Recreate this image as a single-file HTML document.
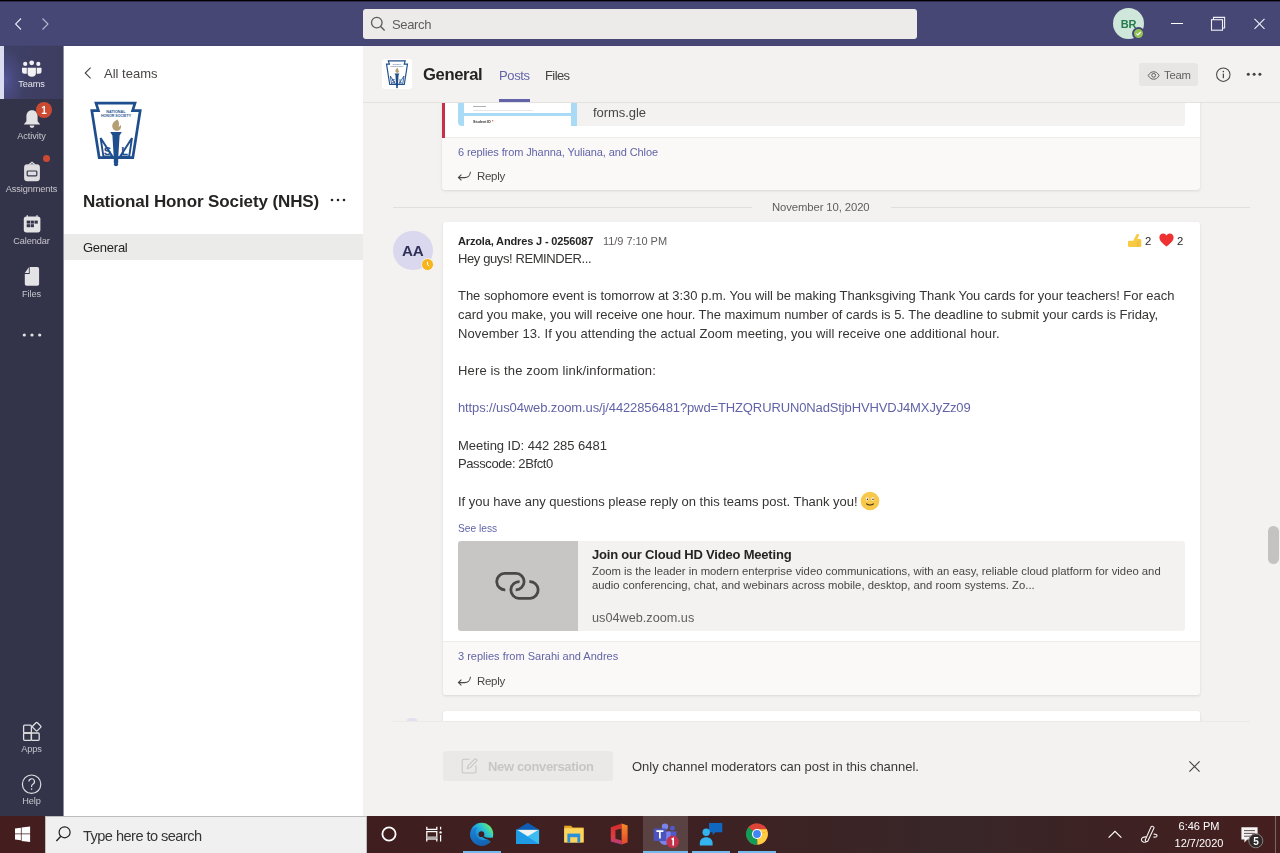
<!DOCTYPE html>
<html><head><meta charset="utf-8">
<style>
*{box-sizing:border-box;margin:0;padding:0}
html,body{width:1280px;height:853px;overflow:hidden;background:#f3f2f1;font-family:"Liberation Sans",sans-serif;color:#252423}
.a{position:absolute}
.t{position:absolute;white-space:nowrap;will-change:transform}
svg{display:block}
</style></head><body>
<div class="a" style="left:0px;top:0px;width:1280px;height:46px;background:#464775"></div>
<div class="a" style="left:0px;top:0px;width:1280px;height:1px;background:#000"></div>
<div class="a" style="left:0px;top:1px;width:1280px;height:1px;background:#2c2c4a"></div>
<div class="a" style="left:0px;top:45px;width:1280px;height:1px;background:#434471"></div>
<svg class="a" style="left:12px;top:16px" width="14" height="16" viewBox="0 0 14 16"><path d="M9 2.5 L3.6 8 L9 13.5" fill="none" stroke="#e8e8f0" stroke-width="1.1"/></svg>
<svg class="a" style="left:38px;top:16px" width="14" height="16" viewBox="0 0 14 16"><path d="M4.5 2.5 L10 8 L4.5 13.5" fill="none" stroke="#b9b9d0" stroke-width="1.1"/></svg>
<div class="a" style="left:363px;top:9px;width:554px;height:30px;background:#edebe9;border-radius:3px"></div>
<svg class="a" style="left:369px;top:15px" width="18" height="18" viewBox="0 0 18 18"><circle cx="7.8" cy="7.6" r="5.3" fill="none" stroke="#5d5b59" stroke-width="1.3"/><path d="M11.6 11.5 L15.6 15.5" stroke="#5d5b59" stroke-width="1.4"/></svg>
<div class="t" style="left:391.5px;top:16px;font-size:13px;line-height:17px;color:#5f5d5b;letter-spacing:-0.35px">Search</div>
<div class="a" style="left:1113px;top:8px;width:31px;height:31px;background:#cfe6da;border-radius:50%"></div>
<div class="t" style="left:1113px;top:17px;font-size:11px;line-height:14px;color:#237b4b;font-weight:700;letter-spacing:-0.3px;width:31px;text-align:center">BR</div>
<div class="a" style="left:1132px;top:27px;width:13px;height:13px;background:#92c353;border-radius:50%;border:2px solid #464775"></div>
<svg class="a" style="left:1134px;top:29px" width="9" height="9" viewBox="0 0 9 9"><path d="M2.3 4.6 L3.9 6 L6.7 3" fill="none" stroke="#fff" stroke-width="1.1"/></svg>
<div class="a" style="left:1171px;top:23px;width:12px;height:1px;background:#fff"></div>
<svg class="a" style="left:1209px;top:15px" width="18" height="18" viewBox="0 0 18 18"><rect x="2.5" y="4.7" width="11" height="10.5" fill="none" stroke="#f0f0f6" stroke-width="1.1"/><path d="M4.5 4.7 V2.4 H15.6 V13 H13.5" fill="none" stroke="#f0f0f6" stroke-width="1.1"/></svg>
<svg class="a" style="left:1252px;top:17px" width="15" height="14" viewBox="0 0 15 14"><path d="M2.5 1.8 L12.5 11.8 M12.5 1.8 L2.5 11.8" stroke="#f0f0f6" stroke-width="1.1"/></svg>
<div class="a" style="left:0px;top:46px;width:63px;height:770px;background:#33344a"></div>
<div class="a" style="left:63px;top:46px;width:1px;height:770px;background:#8d8e9c"></div>
<div class="a" style="left:0px;top:46px;width:63px;height:53px;background:radial-gradient(ellipse 22px 34px at 4px 34px,#55569a 0%,#4a4b80 35%,rgba(61,62,98,0) 100%),linear-gradient(90deg,#3f4066 0px,#3c3d5f 63px)"></div>
<div class="a" style="left:0px;top:46px;width:4px;height:53px;background:#dcdcf0"></div>
<svg class="a" style="left:20px;top:58.5px" width="24" height="20" viewBox="0 0 24 20"><g fill="#f2f2f4"><circle cx="5.2" cy="4.9" r="2.1"/><circle cx="11.7" cy="3.8" r="2.4"/><circle cx="18.3" cy="4.9" r="2.1"/><path d="M2 8.7 h4.8 v6 h-2.3 a2.5 2.5 0 0 1 -2.5 -2.5z"/><path d="M16.7 8.7 h4.8 v3.5 a2.5 2.5 0 0 1 -2.5 2.5 h-2.3z"/><path d="M7.6 8.7 h8.3 v5.2 a4.15 3.8 0 0 1 -8.3 0z"/></g></svg>
<div class="t" style="left:0px;top:78px;font-size:9.2px;line-height:12px;color:#e6e6ea;letter-spacing:-0.1px;width:63px;text-align:center">Teams</div>
<svg class="a" style="left:22px;top:108px" width="20" height="22" viewBox="0 0 20 22"><g fill="#e3e2e4"><path d="M10 2.2 c-3.6 0 -5.6 2.6 -5.6 6.2 v4.8 l-2.6 3.2 h16.4 l-2.6 -3.2 v-4.8 c0 -3.6 -2 -6.2 -5.6 -6.2z"/><path d="M7.6 17.6 h4.8 a2.4 2.4 0 0 1 -4.8 0z"/></g></svg>
<div class="a" style="left:35.5px;top:101.5px;width:16px;height:16px;background:#cc4a31;border-radius:50%"></div>
<div class="t" style="left:35.5px;top:104px;font-size:10px;line-height:13px;color:#fff;font-weight:700;width:16px;text-align:center">1</div>
<div class="t" style="left:0px;top:130px;font-size:9.2px;line-height:12px;color:#c8c6cc;letter-spacing:-0.1px;width:63px;text-align:center">Activity</div>
<div class="a" style="left:43px;top:154.5px;width:7px;height:7px;background:#cc4a31;border-radius:50%"></div>
<svg class="a" style="left:22px;top:160px" width="20" height="23" viewBox="0 0 20 23"><path d="M7.3 4.6 L10 2.3 L12.7 4.6" fill="none" stroke="#dedde0" stroke-width="1.3"/><rect x="2.1" y="4.2" width="15.8" height="17" rx="3.2" fill="#dedde0"/><rect x="5.2" y="11" width="9.6" height="4.8" rx="0.8" fill="none" stroke="#33344a" stroke-width="1.2"/></svg>
<div class="t" style="left:0px;top:182.5px;font-size:9.2px;line-height:12px;color:#c8c6cc;letter-spacing:-0.1px;width:63px;text-align:center">Assignments</div>
<svg class="a" style="left:22px;top:214px" width="20" height="20" viewBox="0 0 20 20"><rect x="1.8" y="2.6" width="16.6" height="15.8" rx="2.6" fill="#e3e2e4"/><g fill="#33344a"><rect x="4.7" y="6.6" width="3.3" height="3"/><rect x="8.6" y="6.6" width="3.3" height="3"/><rect x="12.5" y="6.6" width="3.3" height="3"/><rect x="4.7" y="10.2" width="3.3" height="3"/><rect x="8.6" y="10.2" width="3.3" height="3"/></g><rect x="4.6" y="1.2" width="1.3" height="2.2" fill="#e3e2e4"/><rect x="14.3" y="1.2" width="1.3" height="2.2" fill="#e3e2e4"/></svg>
<div class="t" style="left:0px;top:234.5px;font-size:9.2px;line-height:12px;color:#c8c6cc;letter-spacing:-0.1px;width:63px;text-align:center">Calendar</div>
<svg class="a" style="left:22px;top:265px" width="20" height="22" viewBox="0 0 20 22"><path d="M7.7 2 H15.3 a1.8 1.8 0 0 1 1.8 1.8 V19 a1.8 1.8 0 0 1 -1.8 1.8 H4.6 a1.8 1.8 0 0 1 -1.8 -1.8 V8.9 H7.7z" fill="#e3e2e4"/><path d="M6.9 2.3 L2.8 8.1 H6.9z" fill="#e3e2e4"/></svg>
<div class="t" style="left:0px;top:287.5px;font-size:9.2px;line-height:12px;color:#c8c6cc;letter-spacing:-0.1px;width:63px;text-align:center">Files</div>
<svg class="a" style="left:20px;top:330px" width="24" height="10" viewBox="0 0 24 10"><g fill="#e3e2e4"><circle cx="4.3" cy="5" r="1.6"/><circle cx="12" cy="5" r="1.6"/><circle cx="19.7" cy="5" r="1.6"/></g></svg>
<svg class="a" style="left:21px;top:720px" width="22" height="22" viewBox="0 0 22 22"><g fill="none" stroke="#dedde0" stroke-width="1.3"><rect x="2.6" y="5.2" width="7.8" height="7.8" rx="1"/><rect x="2.6" y="13" width="7.8" height="7.3" rx="1"/><rect x="10.4" y="13" width="7.8" height="7.3" rx="1"/><rect x="12.4" y="3.4" width="6.6" height="6.6" rx="1" transform="rotate(45 15.7 6.7)"/></g></svg>
<div class="t" style="left:0px;top:743px;font-size:9.2px;line-height:12px;color:#c8c6cc;letter-spacing:-0.1px;width:63px;text-align:center">Apps</div>
<svg class="a" style="left:21px;top:773px" width="22" height="22" viewBox="0 0 22 22"><circle cx="10.6" cy="11.2" r="9.2" fill="none" stroke="#dedde0" stroke-width="1.2"/><path d="M7.9 8.6 a2.8 2.8 0 1 1 4.2 2.4 c-1 .6 -1.5 1.1 -1.5 2.3 v.6" fill="none" stroke="#dedde0" stroke-width="1.2"/><circle cx="10.6" cy="16.1" r=".8" fill="#dedde0"/></svg>
<div class="t" style="left:0px;top:795px;font-size:9.2px;line-height:12px;color:#c8c6cc;letter-spacing:-0.1px;width:63px;text-align:center">Help</div>
<div class="a" style="left:64px;top:46px;width:299px;height:770px;background:#fff"></div>
<svg class="a" style="left:81px;top:65px" width="14" height="16" viewBox="0 0 14 16"><path d="M9.6 2.6 L4.2 8 L9.6 13.4" fill="none" stroke="#484644" stroke-width="1.1"/></svg>
<div class="t" style="left:104px;top:65px;font-size:13px;line-height:17px;color:#484644">All teams</div>
<svg class="a" style="left:89px;top:101px" width="54" height="67" viewBox="0 0 54 67"><path d="M7 2.2 H46 L43.6 9.6 H51.2 L43.8 56.6 H10.2 L2.8 9.6 H9.4z" fill="#fff" stroke="#1f4e8c" stroke-width="2.7" stroke-linejoin="miter"/>
 <text x="27" y="11.6" font-family="Liberation Sans" font-size="3.8" font-weight="700" fill="#2b5a94" text-anchor="middle">NATIONAL</text>
 <text x="27" y="16.2" font-family="Liberation Sans" font-size="3.6" font-weight="700" fill="#2b5a94" text-anchor="middle">HONOR SOCIETY</text>
 <path d="M28.5 18.5 c-3.6 1.5 -6 4.6 -5 8.2 c.8 2.4 3.2 3.4 5.2 3 c2.8 -.6 4 -3.4 3 -6 c-.6 1.4 -1.6 2 -2.2 1.8 c1 -2.2 .6 -4.8 -1 -7z" fill="#b49f74"/>
 <path d="M21.2 31 H32.8 L30.6 34.6 L29.2 57 V62 H24.8 V57 L23.4 34.6z" fill="#1f4e8c"/>
 <circle cx="27" cy="63.2" r="2.1" fill="#1f4e8c"/>
 <path d="M11.6 37 L14.4 55.4 H23.4z" fill="none" stroke="#1f4e8c" stroke-width="1.9" stroke-linejoin="miter"/>
 <path d="M43 37 L40.2 55.4 H31.2z" fill="none" stroke="#1f4e8c" stroke-width="1.9" stroke-linejoin="miter"/>
 <text x="18.4" y="54.2" font-family="Liberation Sans" font-size="11" font-weight="700" fill="#1f4e8c" text-anchor="middle">S</text>
 <text x="35.6" y="54.2" font-family="Liberation Sans" font-size="11" font-weight="700" fill="#1f4e8c" text-anchor="middle">L</text></svg>
<div class="t" style="left:83px;top:191px;font-size:17px;line-height:22px;color:#252423;font-weight:700;letter-spacing:-0.1px">National Honor Society (NHS)</div>
<svg class="a" style="left:328px;top:195px" width="20" height="10" viewBox="0 0 20 10"><g fill="#252423"><circle cx="4" cy="5" r="1.3"/><circle cx="10" cy="5" r="1.3"/><circle cx="16" cy="5" r="1.3"/></g></svg>
<div class="a" style="left:64px;top:234px;width:299px;height:26px;background:#ebebea"></div>
<div class="t" style="left:82.6px;top:239px;font-size:13px;line-height:17px;color:#252423;letter-spacing:-0.25px">General</div>
<div class="a" style="left:363px;top:46px;width:917px;height:56px;background:#f3f2f1"></div>
<div class="a" style="left:363px;top:102px;width:917px;height:1px;background:#e4e2e0"></div>
<div class="a" style="left:382px;top:59px;width:30px;height:30px;background:#fff;border-radius:3px"></div>
<svg class="a" style="left:385px;top:60px" width="24" height="29" viewBox="0 0 54 67"><path d="M7 2.2 H46 L43.6 9.6 H51.2 L43.8 56.6 H10.2 L2.8 9.6 H9.4z" fill="#fff" stroke="#1f4e8c" stroke-width="2.7" stroke-linejoin="miter"/>
 <text x="27" y="11.6" font-family="Liberation Sans" font-size="3.8" font-weight="700" fill="#2b5a94" text-anchor="middle">NATIONAL</text>
 <text x="27" y="16.2" font-family="Liberation Sans" font-size="3.6" font-weight="700" fill="#2b5a94" text-anchor="middle">HONOR SOCIETY</text>
 <path d="M28.5 18.5 c-3.6 1.5 -6 4.6 -5 8.2 c.8 2.4 3.2 3.4 5.2 3 c2.8 -.6 4 -3.4 3 -6 c-.6 1.4 -1.6 2 -2.2 1.8 c1 -2.2 .6 -4.8 -1 -7z" fill="#b49f74"/>
 <path d="M21.2 31 H32.8 L30.6 34.6 L29.2 57 V62 H24.8 V57 L23.4 34.6z" fill="#1f4e8c"/>
 <circle cx="27" cy="63.2" r="2.1" fill="#1f4e8c"/>
 <path d="M11.6 37 L14.4 55.4 H23.4z" fill="none" stroke="#1f4e8c" stroke-width="1.9" stroke-linejoin="miter"/>
 <path d="M43 37 L40.2 55.4 H31.2z" fill="none" stroke="#1f4e8c" stroke-width="1.9" stroke-linejoin="miter"/>
 <text x="18.4" y="54.2" font-family="Liberation Sans" font-size="11" font-weight="700" fill="#1f4e8c" text-anchor="middle">S</text>
 <text x="35.6" y="54.2" font-family="Liberation Sans" font-size="11" font-weight="700" fill="#1f4e8c" text-anchor="middle">L</text></svg>
<div class="t" style="left:423px;top:63.5px;font-size:16.6px;line-height:21px;color:#252423;font-weight:700;letter-spacing:-0.35px">General</div>
<div class="t" style="left:498.7px;top:67px;font-size:13px;line-height:17px;color:#6264a7;letter-spacing:-0.35px">Posts</div>
<div class="t" style="left:544.8px;top:67px;font-size:13px;line-height:17px;color:#424242;letter-spacing:-0.6px">Files</div>
<div class="a" style="left:499px;top:99px;width:31px;height:3px;background:#6264a7"></div>
<div class="a" style="left:1139px;top:63px;width:59px;height:23px;background:#e8e6e5;border-radius:3px"></div>
<svg class="a" style="left:1146px;top:69px" width="15" height="12" viewBox="0 0 15 12"><path d="M2.2 6.5 C4 3.5 5.6 2.8 7.65 2.8 C9.7 2.8 11.3 3.5 13.1 6.5 C11.3 9.5 9.7 10.2 7.65 10.2 C5.6 10.2 4 9.5 2.2 6.5z" fill="none" stroke="#605e5c" stroke-width="1"/><circle cx="7.65" cy="6.3" r="1.9" fill="none" stroke="#605e5c" stroke-width="1"/></svg>
<div class="t" style="left:1164px;top:68px;font-size:11.3px;line-height:15px;color:#616161;letter-spacing:-0.25px">Team</div>
<svg class="a" style="left:1214px;top:66px" width="18" height="18" viewBox="0 0 18 18"><circle cx="9.3" cy="8.7" r="6.7" fill="none" stroke="#484644" stroke-width="1.05"/><rect x="8.75" y="7.6" width="1.2" height="4.6" fill="#484644"/><circle cx="9.35" cy="5.6" r=".8" fill="#484644"/></svg>
<svg class="a" style="left:1244px;top:69px" width="20" height="10" viewBox="0 0 20 10"><g fill="#424242"><circle cx="4.3" cy="5.3" r="1.5"/><circle cx="10.1" cy="5.3" r="1.5"/><circle cx="15.9" cy="5.3" r="1.5"/></g></svg>
<div class="a" style="left:363px;top:103px;width:917px;height:618px;overflow:hidden;background:#f3f2f1">
<div class="a" style="left:79px;top:-23px;width:758px;height:110px;background:#faf9f8;border-radius:3px;box-shadow:0 1px 3px rgba(0,0,0,.11)"></div>
<div class="a" style="left:79px;top:-23px;width:758px;height:57.5px;background:#fff;border-radius:3px 3px 0 0;border-bottom:1px solid #edebe9"></div>
<div class="a" style="left:79px;top:-23px;width:3px;height:57.5px;background:#c4314b"></div>
<div class="a" style="left:214px;top:-23px;width:608px;height:46px;background:#f3f2f1;border-radius:0 0 3px 0"></div>
<div class="a" style="left:94.5px;top:-23px;width:119.5px;height:46px;background:#a9dbf6;border-radius:0 0 0 4px"></div>
<div class="a" style="left:101px;top:-23px;width:107px;height:33px;background:#fff"></div>
<div class="a" style="left:101px;top:13px;width:107px;height:10px;background:#fff"></div>
<div class="a" style="left:110px;top:3px;width:13px;height:1px;background:#b0b0b0"></div>
<div class="a" style="left:110px;top:7px;width:60px;height:1px;background:#e6e6e6"></div>
<div class="t" style="left:110px;top:17px;font-size:3.6px;line-height:5px;color:#333;font-weight:700">Student ID <span style="color:#d93025">*</span></div>
<div class="t" style="left:229.5px;top:1px;font-size:13px;line-height:17px;color:#484644;letter-spacing:-0.05px">forms.gle</div>
<div class="t" style="left:94.5px;top:42px;font-size:11px;line-height:14px;color:#6264a7;letter-spacing:-0.1px">6 replies from Jhanna, Yuliana, and Chloe</div>
<svg class="a" style="left:92.5px;top:65.5px" width="16" height="13" viewBox="0 0 16 13"><path d="M14.4 2.8 c0 3.6 -2.6 5.8 -5.8 5.8 H2.6 M5.4 5.6 L2.4 8.6 L5.4 11.4" fill="none" stroke="#484644" stroke-width="1.05"/></svg>
<div class="t" style="left:113.5px;top:66px;font-size:11.5px;line-height:15px;color:#484644;letter-spacing:-0.3px">Reply</div>
<div class="a" style="left:30px;top:104px;width:359px;height:1px;background:#e1dfdd"></div>
<div class="a" style="left:528px;top:104px;width:359px;height:1px;background:#e1dfdd"></div>
<div class="t" style="left:409px;top:97px;font-size:11.3px;line-height:15px;color:#605e5c;letter-spacing:-0.1px">November 10, 2020</div>
<div class="a" style="left:79.5px;top:119px;width:757.5px;height:473px;background:#faf9f8;border-radius:3px;box-shadow:0 1px 3px rgba(0,0,0,.11)"></div>
<div class="a" style="left:79.5px;top:119px;width:757.5px;height:420px;background:#fff;border-radius:3px 3px 0 0;border-bottom:1px solid #edebe9"></div>
<div class="a" style="left:30px;top:127.5px;width:39.5px;height:39.5px;background:#dad8ee;border-radius:50%"></div>
<div class="t" style="left:29.5px;top:138px;font-size:15.2px;line-height:19px;color:#302f58;font-weight:700;letter-spacing:-0.1px;width:39.5px;text-align:center">AA</div>
<div class="a" style="left:58px;top:155px;width:13px;height:13px;background:#f8b41c;border-radius:50%;border:1.5px solid #f3f2f1"></div>
<svg class="a" style="left:58px;top:155px" width="13" height="13" viewBox="0 0 13 13"><path d="M6.5 3.8 V6.7 L8.3 8" fill="none" stroke="#fff" stroke-width="1"/></svg>
<div class="t" style="left:95px;top:131px;font-size:11px;line-height:14px;color:#252423;font-weight:700;letter-spacing:-0.15px">Arzola, Andres J - 0256087</div>
<div class="t" style="left:240px;top:131px;font-size:11px;line-height:14px;color:#605e5c;letter-spacing:-0.05px">11/9 7:10 PM</div>
<svg class="a" style="left:763px;top:129px" width="17" height="17" viewBox="0 0 17 17"><path d="M2 10 C2 9.2 2.6 8.8 3.4 8.8 H7.2 L10.4 2.6 C10.9 1.6 12.4 1.3 12.9 2.3 C13.2 3 13 3.7 12.6 4.5 L11.4 6.9 H14 C15 6.9 15.3 7.6 15.3 8.4 V13.4 C15.3 14.4 14.6 14.9 13.6 14.9 H3.6 C2.6 14.9 2 14.3 2 13.4z" fill="#f9cb45"/><path d="M11.4 9.4 H15 M11.4 11.4 H15 M11.4 13.3 H14.6 M11.4 9.4 V14.6" fill="none" stroke="#e2ac34" stroke-width=".5"/></svg>
<div class="t" style="left:782px;top:131px;font-size:11.3px;line-height:15px;color:#252423">2</div>
<svg class="a" style="left:795px;top:129px" width="17" height="16" viewBox="0 0 17 16"><path d="M8.5 14.6 C5 11.8 1.4 9.2 1.4 5.6 C1.4 3.2 3.2 1.6 5.2 1.6 C6.6 1.6 7.8 2.4 8.5 3.6 C9.2 2.4 10.4 1.6 11.8 1.6 C13.8 1.6 15.6 3.2 15.6 5.6 C15.6 9.2 12 11.8 8.5 14.6z" fill="#ee3232"/></svg>
<div class="t" style="left:813.5px;top:131px;font-size:11.3px;line-height:15px;color:#252423">2</div>
<div class="t" style="left:95px;top:147px;font-size:13px;line-height:18.67px;color:#363534;letter-spacing:-0.03px"><span style="letter-spacing:-0.4px">Hey guys! REMINDER...</span><br>&nbsp;<br>The sophomore event is tomorrow at 3:30 p.m. You will be making Thanksgiving Thank You cards for your teachers! For each<br>card you make, you will receive one hour. The maximum number of cards is 5. The deadline to submit your cards is Friday,<br><span style="letter-spacing:0.09px">November 13. If you attending the actual Zoom meeting, you will receive one additional hour.</span><br>&nbsp;<br><span style="letter-spacing:0.15px">Here is the zoom link/information:</span><br>&nbsp;<br><span style="color:#6264a7;letter-spacing:-0.12px">https://us04web.zoom.us/j/4422856481?pwd=THZQRURUN0NadStjbHVHVDJ4MXJyZz09</span><br>&nbsp;<br>Meeting ID: 442 285 6481<br><span style="letter-spacing:-0.4px">Passcode: 2Bfct0</span><br>&nbsp;<br>If you have any questions please reply on this teams post. Thank you!</div>
<svg class="a" style="left:497px;top:387.5px" width="20" height="20" viewBox="0 0 20 20"><circle cx="10" cy="10" r="9.3" fill="#f8c84a"/><ellipse cx="7.2" cy="8" rx="1.4" ry="1.7" fill="#fff"/><ellipse cx="12.8" cy="8" rx="1.4" ry="1.7" fill="#fff"/><circle cx="7.4" cy="8.3" r=".8" fill="#3a2a10"/><circle cx="13" cy="8.3" r=".8" fill="#3a2a10"/><path d="M6.2 12.6 Q10 15.4 13.8 12.6" fill="none" stroke="#3a2a10" stroke-width="1.1"/></svg>
<div class="t" style="left:95px;top:418.5px;font-size:10.2px;line-height:13px;color:#6264a7">See less</div>
<div class="a" style="left:95px;top:438px;width:727px;height:90px;background:#f3f2f1;border-radius:3px;overflow:hidden"></div>
<div class="a" style="left:95px;top:438px;width:119.5px;height:90px;background:#c8c6c4;border-radius:3px 0 0 3px"></div>
<svg class="a" style="left:125px;top:462px" width="60" height="40" viewBox="0 0 60 40"><g fill="none" stroke="#4a4846" stroke-width="2.8"><path d="M17.3 24.8 A8.2 8.2 0 0 1 16.6 8.4 H28.1 A8.2 8.2 0 0 1 27.7 24.8"/><path d="M31.6 16.6 A8.35 8.35 0 0 0 30.85 33.3 H42.25 A8.35 8.35 0 0 0 41.3 16.6"/></g></svg>
<div class="t" style="left:229.2px;top:442.5px;font-size:13px;line-height:17px;color:#252423;font-weight:700;letter-spacing:-0.2px">Join our Cloud HD Video Meeting</div>
<div class="t" style="left:229.2px;top:461px;font-size:11.3px;line-height:14px;color:#484644">Zoom is the leader in modern enterprise video communications, with an easy, reliable cloud platform for video and<br>audio conferencing, chat, and webinars across mobile, desktop, and room systems. Zo...</div>
<div class="t" style="left:229.2px;top:506.5px;font-size:12.7px;line-height:16px;color:#605e5c">us04web.zoom.us</div>
<div class="t" style="left:94.7px;top:546px;font-size:11px;line-height:14px;color:#6264a7">3 replies from Sarahi and Andres</div>
<svg class="a" style="left:92.5px;top:570.5px" width="16" height="13" viewBox="0 0 16 13"><path d="M14.4 2.8 c0 3.6 -2.6 5.8 -5.8 5.8 H2.6 M5.4 5.6 L2.4 8.6 L5.4 11.4" fill="none" stroke="#484644" stroke-width="1.05"/></svg>
<div class="t" style="left:113.5px;top:571px;font-size:11.5px;line-height:15px;color:#484644;letter-spacing:-0.3px">Reply</div>
<div class="a" style="left:79.5px;top:608.3px;width:757.5px;height:40px;background:#fff;border-radius:3px;box-shadow:0 1px 3px rgba(0,0,0,.11)"></div>
<div class="a" style="left:44px;top:615px;width:10px;height:4px;background:#e1dff0;border-radius:50% 50% 0 0"></div>
</div>
<div class="a" style="left:393px;top:721px;width:857px;height:1px;background:#eceae8"></div>
<div class="a" style="left:1268px;top:526px;width:11px;height:37.5px;background:#c4c3c2;border-radius:5.5px"></div>
<div class="a" style="left:443px;top:751px;width:170px;height:30px;background:#ebe9e8;border-radius:3px"></div>
<svg class="a" style="left:459px;top:756px" width="20" height="20" viewBox="0 0 20 20"><path d="M10.5 3.2 H5 a1.8 1.8 0 0 0 -1.8 1.8 V15.2 a1.8 1.8 0 0 0 1.8 1.8 H15.2 a1.8 1.8 0 0 0 1.8 -1.8 V9.6" fill="none" stroke="#c8c6c4" stroke-width="1.1"/><path d="M8.4 12.4 L9 9.8 L15.4 3.4 a1.4 1.4 0 0 1 2 2 L11 11.8z" fill="none" stroke="#c8c6c4" stroke-width="1.1"/></svg>
<div class="t" style="left:487.5px;top:758px;font-size:13px;line-height:17px;color:#c8c6c4;font-weight:700;letter-spacing:-0.35px">New conversation</div>
<div class="t" style="left:631.5px;top:758px;font-size:13px;line-height:17px;color:#3b3a39;letter-spacing:-0.03px">Only channel moderators can post in this channel.</div>
<svg class="a" style="left:1187px;top:759px" width="15" height="15" viewBox="0 0 15 15"><path d="M2.4 2.4 L12.6 12.6 M12.6 2.4 L2.4 12.6" stroke="#484644" stroke-width="1.15"/></svg>
<div class="a" style="left:0px;top:816px;width:1280px;height:37px;background:linear-gradient(90deg,#461c1d 0%,#3f1d1e 25%,#402021 45%,#3c2324 62%,#382628 75%,#3f2122 90%,#461f1f 100%)"></div>
<div class="a" style="left:0px;top:816px;width:45px;height:37px;background:#441e1f"></div>
<svg class="a" style="left:13px;top:825px" width="19" height="19" viewBox="0 0 19 19"><g fill="#fff"><path d="M2 3.4 L7.9 2.7 V8.6 H2z"/><path d="M8.6 2.6 L17.1 1.6 V8.6 H8.6z"/><path d="M2 9.3 H7.9 V15.2 L2 14.5z"/><path d="M8.6 9.3 H17.1 V17 L8.6 16z"/></g></svg>
<div class="a" style="left:45px;top:816px;width:322px;height:37px;background:#f0f0f0;border:1px solid #bdbdbd;border-bottom:none"></div>
<svg class="a" style="left:54px;top:826px" width="20" height="20" viewBox="0 0 20 20"><circle cx="10.6" cy="6.3" r="5.5" fill="none" stroke="#202020" stroke-width="1.2"/><path d="M6.8 10.2 L2.4 15" stroke="#202020" stroke-width="1.3"/></svg>
<div class="t" style="left:83px;top:827px;font-size:14.6px;line-height:19px;color:#353535;letter-spacing:-0.55px">Type here to search</div>
<svg class="a" style="left:380px;top:825px" width="18" height="18" viewBox="0 0 18 18"><circle cx="9" cy="9" r="6.6" fill="none" stroke="#fff" stroke-width="1.8"/></svg>
<svg class="a" style="left:424px;top:825px" width="20" height="18" viewBox="0 0 20 18"><g fill="none" stroke="#fff" stroke-width="1.25"><path d="M2.8 1.8 V4.4 H12.8 V1.8"/><rect x="2.8" y="6.6" width="10" height="7.4"/><path d="M2.8 14 V16.4 M12.8 14 V16.4"/><path d="M16.6 1.8 V4.6 M16.6 10 V16.4"/></g><rect x="2.8" y="11.4" width="10" height="2.8" fill="#b0aaaa"/><circle cx="16.6" cy="7.4" r="1.2" fill="#fff"/></svg>
<svg class="a" style="left:468px;top:821px" width="27" height="27" viewBox="0 0 27 27"><defs><linearGradient id="eg1" x1="0.15" y1="0.85" x2="0.9" y2="0.25"><stop offset="0" stop-color="#0f63bd"/><stop offset=".45" stop-color="#1f9fe0"/><stop offset=".75" stop-color="#2cc6cf"/><stop offset="1" stop-color="#5de37a"/></linearGradient><linearGradient id="eg2" x1="0" y1="0" x2="1" y2="1"><stop offset="0" stop-color="#1c86d8"/><stop offset="1" stop-color="#0d4f9e"/></linearGradient></defs>
<circle cx="13.7" cy="13.2" r="11.5" fill="url(#eg1)"/>
<path d="M2.2 13.8 C2.4 9.2 5.8 6.6 9.6 6.6 C7.4 8.6 7 12.4 8.6 15.4 C10.4 18.6 14.6 19.6 18.2 18.6 C20.2 18.1 22.2 17.6 24.2 17.3 C22.4 21.8 18.4 24.7 13.7 24.7 C7.4 24.7 2.2 19.8 2.2 13.8z" fill="url(#eg2)" opacity=".85"/>
<circle cx="13.4" cy="13.2" r="2.9" fill="#3f1e1f"/>
<path d="M15.2 15.2 C17.6 17.4 21 17.9 25.6 17.2 L25.6 22 L22.8 20.6z" fill="#3f1e1f"/><path d="M15 15.6 C17.4 17.6 20.6 18 24.6 17.4" fill="none" stroke="#3f1e1f" stroke-width="1.6"/></svg>
<div class="a" style="left:463px;top:851px;width:38px;height:2px;background:#76b9ed"></div>
<svg class="a" style="left:515px;top:821px" width="26" height="25" viewBox="0 0 26 25"><path d="M1.3 8.8 L12.8 1.8 L24.1 8.8z" fill="#0f5cb5"/><rect x="1.3" y="8.6" width="22.8" height="14.4" fill="#3bbdf2"/><path d="M1.3 8.6 L24.1 23 H1.3z" fill="#1f9be6"/><path d="M2.6 8.9 H23 L12.8 15.2z" fill="#f2f2f2"/></svg>
<svg class="a" style="left:562px;top:823px" width="24" height="22" viewBox="0 0 24 22"><path d="M2.2 2.8 H9 L10.8 4.6 H21.6 V19.4 H2.2z" fill="#e2a624"/><path d="M2.2 5.2 H21.6 V19.4 H2.2z" fill="#fdd45c"/><rect x="5.4" y="10.6" width="12.8" height="8.8" fill="#2a90da"/><rect x="8.2" y="14.2" width="7.2" height="5.2" fill="#fdd45c"/></svg>
<svg class="a" style="left:608px;top:821px" width="22" height="26" viewBox="0 0 22 26"><defs><linearGradient id="of1" x1="0" y1="0" x2="0" y2="1"><stop offset="0" stop-color="#d32a2a"/><stop offset=".6" stop-color="#e03c3c"/><stop offset="1" stop-color="#b03a8a"/></linearGradient><linearGradient id="of2" x1="0" y1="0" x2="0" y2="1"><stop offset="0" stop-color="#f58a2a"/><stop offset="1" stop-color="#e3462a"/></linearGradient></defs><path d="M2.8 6.2 L13.6 2.6 V7.4 L7.4 9 V17.8 L13.6 19.6 V23.6 L2.8 20.4z" fill="url(#of1)"/><path d="M13.6 2.6 L19.6 4.4 V21.6 L13.6 23.6z" fill="url(#of2)"/></svg>
<div class="a" style="left:643px;top:816px;width:45px;height:37px;background:rgba(255,255,255,.15)"></div>
<div class="a" style="left:643px;top:851px;width:45px;height:2px;background:#76b9ed"></div>
<svg class="a" style="left:651px;top:822px" width="30" height="27" viewBox="0 0 30 27"><circle cx="14" cy="4.6" r="3.2" fill="#7b83eb"/><circle cx="21.4" cy="6.2" r="2.4" fill="#5059c9"/><path d="M17 9.4 H25.4 V16 a4.2 4.2 0 0 1 -8.4 0z" fill="#5059c9"/><path d="M8.4 9.4 H19.6 V17.4 a5.6 5.6 0 0 1 -11.2 0z" fill="#7b83eb"/><rect x="2.6" y="6.4" width="12.6" height="12.6" rx="1.2" fill="#4b53bc"/><path d="M5.4 9.2 H12.4 M8.9 9.2 V16.4" stroke="#fff" stroke-width="1.7"/><circle cx="21.6" cy="19.8" r="6.2" fill="#c4314b"/><path d="M20.6 17.4 L22.2 16.4 V23.4" fill="none" stroke="#fff" stroke-width="1.6"/></svg>
<svg class="a" style="left:697px;top:821px" width="28" height="26" viewBox="0 0 28 26"><path d="M12 2 H25.3 V11.2 H18.6 L15.6 14 V11.2 H12z" fill="#0f67bf"/><circle cx="9.2" cy="11.2" r="3.7" fill="#34b4ee"/><path d="M2.8 24.4 V22 C2.8 18.6 5.6 16.2 9.2 16.2 C12.8 16.2 15.6 18.6 15.6 22 V24.4z" fill="#34b4ee"/></svg>
<div class="a" style="left:692px;top:851px;width:38px;height:2px;background:#76b9ed"></div>
<svg class="a" style="left:745px;top:822px" width="24" height="24" viewBox="0 0 24 24"><circle cx="12" cy="12" r="10.8" fill="#db4437"/><path d="M12 12 L2.6 17.4 A10.8 10.8 0 0 0 12.6 22.8z" fill="#0f9d58"/><path d="M12 12 L22.6 9.6 A10.8 10.8 0 0 1 12.6 22.8z" fill="#ffcd40"/><path d="M12 12 L2.6 17.4 A10.8 10.8 0 0 1 3.4 5.2z" fill="#0f9d58"/><path d="M12 7.2 H21.8 A10.8 10.8 0 0 1 22.6 9.6 L12 12z" fill="#ffcd40"/><circle cx="12" cy="12" r="5" fill="#fff"/><circle cx="12" cy="12" r="3.9" fill="#4285f4"/></svg>
<div class="a" style="left:738px;top:851px;width:38px;height:2px;background:#76b9ed"></div>
<svg class="a" style="left:1106px;top:827px" width="18" height="14" viewBox="0 0 18 14"><path d="M2.6 10.6 L9 4.4 L15.4 10.6" fill="none" stroke="#fff" stroke-width="1.2"/></svg>
<svg class="a" style="left:1139px;top:825px" width="22" height="20" viewBox="0 0 22 20"><g fill="none" stroke="#f4f0f0" stroke-width="1.1"><path d="M12.2 1.6 Q14.4 0.6 15.1 2.8 L8.7 16.2 L6.9 16.9 L6.2 15z"/><path d="M7.4 16.6 C5.4 17.8 2.6 17.2 2.4 14.8 C2.3 12.8 4.4 11.6 7.6 12"/><path d="M14.6 9.2 C16.8 9 18.2 9.8 18 11 C17.8 12.1 16.2 12.4 14.4 12"/></g></svg>
<div class="t" style="left:1172px;top:819px;font-size:11px;line-height:14px;color:#fff;width:54px;text-align:center">6:46 PM</div>
<div class="t" style="left:1172px;top:836px;font-size:11px;line-height:14px;color:#fff;width:54px;text-align:center">12/7/2020</div>
<svg class="a" style="left:1239px;top:825px" width="30" height="26" viewBox="0 0 30 26"><path d="M2.4 2.2 H18.6 V14.6 H8.4 L5.4 17.6 V14.6 H2.4z" fill="#f4f4f4"/><g stroke="#6a5050" stroke-width="1"><path d="M5 5.6 H16 M5 8.4 H16 M5 11.2 H12"/></g><circle cx="16.8" cy="15.8" r="7" fill="#2e2a2a" stroke="#8a8080" stroke-width="1"/></svg>
<div class="t" style="left:1250.8px;top:834.5px;font-size:10px;line-height:13px;color:#fff;font-weight:700;width:10px;text-align:center">5</div>
<div class="a" style="left:1275px;top:816px;width:1px;height:37px;background:#7a6868"></div>
</body></html>
